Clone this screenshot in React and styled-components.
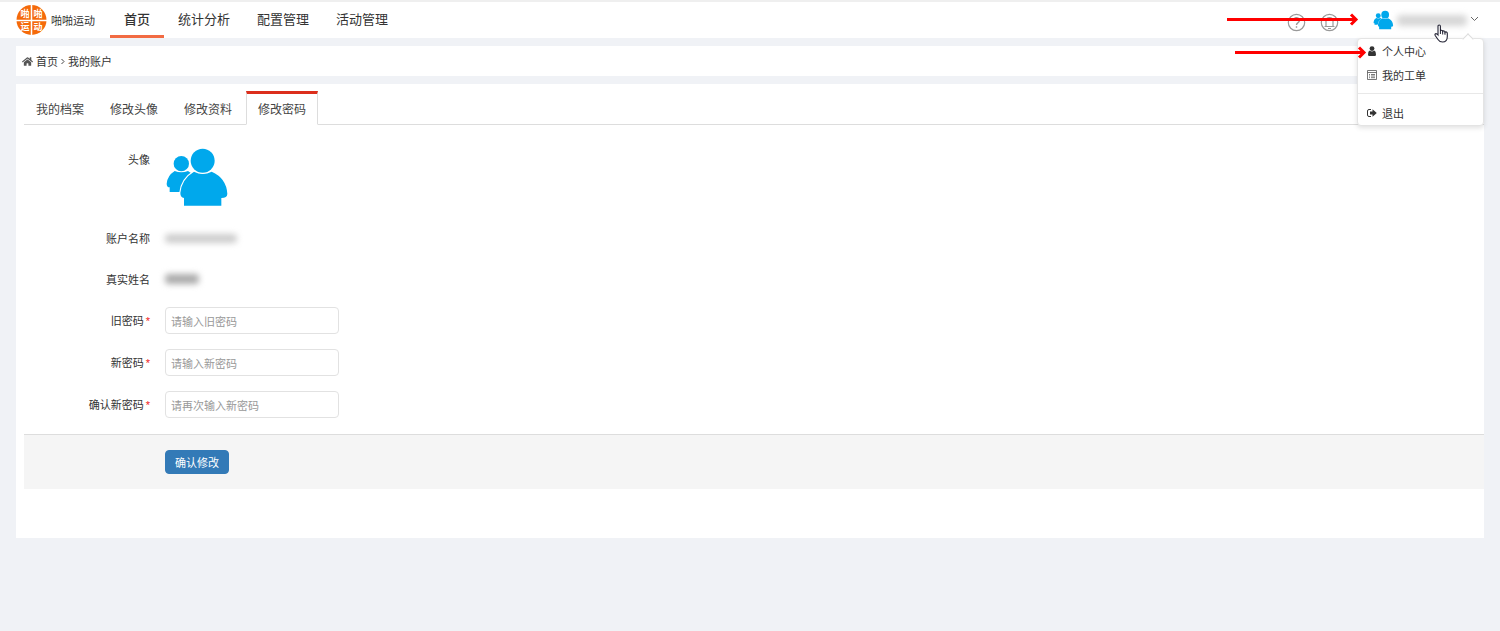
import * as React from "react";
import { useState } from "react";
import styled, { createGlobalStyle } from "styled-components";
import { FaHome } from "react-icons/fa";

const GlobalStyle = createGlobalStyle`
  * {
    box-sizing: border-box;
  }
  body {
    margin: 0;
    background: #f0f2f6;
    color: #333;
    font-family: "Noto Sans CJK SC", "Liberation Sans", sans-serif;
    font-size: 11px;
    line-height: 16px;
  }
  a {
    color: inherit;
    text-decoration: none;
  }
`;

const Header = styled.header`
  position: relative;
  display: flex;
  align-items: stretch;
  height: 38px;
  padding: 0 21px 0 16px;
  background: #fff;
  border-top: 2px solid #efefef;
`;

const Brand = styled.a`
  display: flex;
  align-items: center;
  gap: 4px;
  width: 94px;
`;

const Nav = styled.nav`
  display: flex;
  gap: 25px;
`;

const NavLink = styled.a`
  padding: 7px ${(p) => (p.$active ? "14px" : "0")} 0;
  margin-right: ${(p) => (p.$active ? "-11px" : "2px")};
  font-size: 13px;
  line-height: 20px;
  font-weight: ${(p) => (p.$active ? "500" : "400")};
  border-bottom: 3px solid ${(p) => (p.$active ? "#f26b43" : "transparent")};
`;

const Tools = styled.div`
  display: flex;
  align-items: center;
  gap: 14px;
  margin-left: auto;
`;

const IconButton = styled.button`
  display: flex;
  padding: 4px 0 0;
  border: 0;
  background: none;
  color: #999;
`;

const UserButton = styled.button`
  display: flex;
  align-items: center;
  gap: 3px;
  margin-left: 20px;
  padding: 0;
  border: 0;
  background: none;
  color: #666;
`;

const Smudge = styled.span`
  display: block;
  width: ${(p) => p.$width};
  height: ${(p) => p.$height};
  border-radius: 4px;
  background: ${(p) => p.$tone};
  filter: blur(3px);
`;

const Menu = styled.div`
  position: absolute;
  z-index: 2;
  top: 36px;
  right: 16px;
  width: 127px;
  background: #fff;
  border: 1px solid #e4e4e4;
  border-radius: 4px;
  box-shadow: 0 2px 5px rgba(0, 0, 0, 0.12);

  &::before {
    content: "";
    position: absolute;
    top: -4px;
    right: 11px;
    width: 7px;
    height: 7px;
    background: #fff;
    border: 1px solid #ddd;
    border-width: 1px 0 0 1px;
    transform: rotate(45deg);
  }
`;

const MenuItem = styled.a`
  display: flex;
  align-items: center;
  gap: 5px;
  height: 24px;
  padding: 0 9px;

  svg {
    width: 10px;
    height: 10px;
  }
`;

const MenuDivider = styled.hr`
  height: 1px;
  margin: 6px 0 7px;
  border: 0;
  background: #e8e8e8;
`;

const Arrow = styled.svg`
  position: absolute;
  z-index: 3;
  top: ${(p) => p.$top};
  right: ${(p) => p.$right};
  pointer-events: none;
`;

const Cursor = styled.svg`
  position: absolute;
  z-index: 4;
  top: 22px;
  right: 51px;
  pointer-events: none;
`;

const Content = styled.main`
  display: flex;
  flex-direction: column;
  gap: 8px;
  padding: 8px 16px;
`;

const Breadcrumb = styled.nav`
  display: flex;
  align-items: center;
  gap: 3px;
  height: 30px;
  padding: 0 6px;
  background: #fff;
`;

const Card = styled.section`
  padding: 7px 0 49px 8px;
  background: #fff;
`;

const Tabs = styled.div`
  display: flex;
  gap: 2px;
  border-bottom: 1px solid #ddd;
`;

const Tab = styled.button`
  height: 34px;
  margin-bottom: -1px;
  padding: 0 11px;
  border: 1px solid ${(p) => (p.$active ? "#ddd" : "transparent")};
  border-top: 3px solid ${(p) => (p.$active ? "#dc2f1c" : "transparent")};
  border-bottom-color: ${(p) => (p.$active ? "#fff" : "transparent")};
  background: none;
  color: #444;
  font-family: inherit;
  font-size: 12px;
  line-height: 16px;
`;

const Form = styled.form`
  display: flex;
  flex-direction: column;
  gap: 15px;
  padding-top: 22px;
`;

const Row = styled.div`
  display: grid;
  grid-template-columns: 126px 1fr;
  column-gap: 15px;
  align-items: ${(p) => (p.$top ? "start" : "center")};
  min-height: ${(p) => p.$height || "27px"};
`;

const Label = styled.label`
  padding-top: ${(p) => (p.$top ? "4px" : "0")};
  text-align: right;
`;

const Required = styled.span`
  margin-left: 2px;
  color: #f02020;
  font-family: "Liberation Sans", sans-serif;
`;

const Input = styled.input`
  width: 174px;
  height: 27px;
  padding: 0 5px;
  border: 1px solid #e2e2e2;
  border-radius: 4px;
  color: #333;
  font-family: inherit;
  font-size: 11px;

  &::placeholder {
    color: #999;
  }
`;

const Footer = styled.div`
  margin-top: 1px;
  padding: 15px 0 15px 141px;
  background: #f5f5f5;
  border-top: 1px solid #ddd;
`;

const Submit = styled.button`
  display: block;
  height: 24px;
  padding: 0 9px;
  border: 1px solid #337ab7;
  border-radius: 4px;
  background: #337ab7;
  color: #fff;
  font-family: inherit;
  font-size: 11px;
`;

function Logo() {
  return (
    <svg width="31" height="32" viewBox="0 0 31 32">
      <circle cx="15.5" cy="16" r="15" fill="#f56a0a" />
      <path d="M15.5 1v30M0 16.500h31" stroke="#fff" strokeWidth="1.500" />
      <g fill="#fff" fontSize="9" fontWeight="700" textAnchor="middle">
        <text x="9" y="13">啪</text>
        <text x="22" y="13">啪</text>
        <text x="9" y="26">运</text>
        <text x="22" y="26">动</text>
      </g>
    </svg>
  );
}

function People({ width, height }) {
  return (
    <svg width={width} height={height} viewBox="435 50 195 180" fill="#00a8ec">
      <circle cx="484" cy="100" r="23" />
      <path d="M464 122Q484 130 504 122L530 140V185H449V171Q440 171 440 160Q442 136 464 122Z" />
      <path
        d="M522 124Q548 138 575 124Q619 143 622 190Q622 203 604 203V226H492V203Q481 201 481 188Q485 146 522 124Z"
        stroke="#fff"
        strokeWidth="7"
        paintOrder="stroke"
      />
      <circle cx="548" cy="91" r="36" stroke="#fff" strokeWidth="6" paintOrder="stroke" />
    </svg>
  );
}

function HelpIcon() {
  return (
    <svg width="19" height="19" viewBox="0 0 19 19" fill="none" stroke="currentColor">
      <circle cx="9.5" cy="9.5" r="8.2" strokeWidth="1.2" />
      <path d="M6.800 7.500a2.700 2.700 0 1 1 4 2.300c-1 .6-1.300 1-1.300 2.200M9.500 13.200v1.500" strokeWidth="1.4" />
    </svg>
  );
}

function BellIcon() {
  return (
    <svg width="19" height="19" viewBox="0 0 19 19" fill="none" stroke="currentColor">
      <circle cx="9.5" cy="9.5" r="8.2" strokeWidth="1.2" />
      <path d="M6 13.500V8a3.500 3.500 0 0 1 7 0v5.500M4.500 13.500h10M8 15.500h3" strokeWidth="1.2" />
    </svg>
  );
}

function RedArrow({ top, right }) {
  return (
    <Arrow $top={top} $right={right} width="132" height="14" viewBox="0 0 132 14">
      <path d="M0 7.500H129M124 2.500L129 7.500L124 12.500" fill="none" stroke="#f00" strokeWidth="3" />
    </Arrow>
  );
}

const navItems = ["首页", "统计分析", "配置管理", "活动管理"];
const tabs = ["我的档案", "修改头像", "修改资料", "修改密码"];
const fields = [
  { id: "old", label: "旧密码", placeholder: "请输入旧密码" },
  { id: "new", label: "新密码", placeholder: "请输入新密码" },
  { id: "confirm", label: "确认新密码", placeholder: "请再次输入新密码" },
];

function App() {
  const [tab, setTab] = useState("修改密码");
  const [showMenu, setShowMenu] = useState(true);
  const [values, setValues] = useState({ old: "", new: "", confirm: "" });

  const handleSubmit = (e) => {
    e.preventDefault();
  };

  return (
    <>
      <GlobalStyle />
      <Header>
        <Brand href="#">
          <Logo />
          啪啪运动
        </Brand>
        <Nav>
          {navItems.map((item, i) => (
            <NavLink href="#" key={item} $active={i === 0}>
              {item}
            </NavLink>
          ))}
        </Nav>
        <Tools>
          <IconButton type="button" aria-label="帮助">
            <HelpIcon />
          </IconButton>
          <IconButton type="button" aria-label="通知">
            <BellIcon />
          </IconButton>
          <UserButton type="button" aria-label="账户" onClick={() => setShowMenu(!showMenu)}>
            <People width="21" height="20" />
            <Smudge $width="70px" $height="11px" $tone="#d6d6d6" />
            <svg width="9" height="8" viewBox="0 0 9 8" fill="none" stroke="currentColor">
              <path d="M1 1l3.500 3.500L8 1" />
            </svg>
          </UserButton>
        </Tools>

        {showMenu && (
          <Menu>
            <MenuItem href="#">
              <svg viewBox="0 0 10 10" fill="#333">
                <circle cx="5" cy="2.6" r="2.4" />
                <path d="M2.800 4.600Q5 6.400 7.200 4.600Q9 5.200 9 8.500Q9 10 7.800 10H2.200Q1 10 1 8.500Q1 5.200 2.800 4.600Z" />
              </svg>
              个人中心
            </MenuItem>
            <MenuItem href="#">
              <svg viewBox="0 0 10 10" fill="none" stroke="#555">
                <path d="M.5 .5h9v9h-9zM.5 2.500h9M2 4.500h1M4 4.500h4M2 6h1M4 6h4M2 7.700h1M4 7.700h4" strokeWidth=".8" />
              </svg>
              我的工单
            </MenuItem>
            <MenuDivider />
            <MenuItem href="#">
              <svg viewBox="0 0 10 10" fill="#333">
                <path d="M4 1.500H2Q.5 1.500 .5 3V7Q.5 8.500 2 8.500H4" fill="none" stroke="#333" />
                <path d="M3 3.500H5.500V1.300L9.800 5L5.500 8.700V6.500H3Z" />
              </svg>
              退出
            </MenuItem>
          </Menu>
        )}

        <RedArrow top="10px" right="141px" />
        <RedArrow top="43px" right="133px" />
        <Cursor width="15" height="19" viewBox="0 0 15 19">
          <path
            d="M4 11V2.200Q4 1 5.200 1T6.400 2.200V7Q6.800 6 7.800 6.300Q8.700 6.500 8.700 7.500Q9.300 6.600 10.200 7Q11 7.300 11 8.300Q11.600 7.600 12.500 8Q13.300 8.400 13.300 9.500V12.500Q13.300 18 8.500 18Q5.500 18 4 15.500L1.200 11.500Q.6 10.200 1.600 9.700Q2.600 9.400 4 11Z"
            fill="#fff"
            stroke="#223"
            strokeWidth="1.1"
          />
          <path d="M6.400 7v3M8.700 7.500v3M11 8.300v2.500" stroke="#223" />
        </Cursor>
      </Header>

      <Content>
        <Breadcrumb>
          <FaHome size={11} color="#555" />
          <a href="#">首页</a>
          <svg width="4" height="7" viewBox="0 0 4 7" fill="none" stroke="#444">
            <path d="M.5 1L3 3.500L.5 6" />
          </svg>
          <span>我的账户</span>
        </Breadcrumb>

        <Card>
          <Tabs>
            {tabs.map((t) => (
              <Tab type="button" key={t} $active={t === tab} onClick={() => setTab(t)}>
                {t}
              </Tab>
            ))}
          </Tabs>

          <Form onSubmit={handleSubmit}>
            <Row $top $height="63px">
              <Label as="span" $top>头像</Label>
              <People width="65" height="60" />
            </Row>
            <Row $height="26px">
              <Label as="span">账户名称</Label>
              <Smudge $width="72px" $height="9px" $tone="#ccc" />
            </Row>
            <Row $height="26px">
              <Label as="span">真实姓名</Label>
              <Smudge $width="34px" $height="10px" $tone="#aaa" />
            </Row>
            {fields.map((f) => (
              <Row key={f.id}>
                <Label htmlFor={f.id}>
                  {f.label}
                  <Required>*</Required>
                </Label>
                <Input
                  id={f.id}
                  type="password"
                  placeholder={f.placeholder}
                  value={values[f.id]}
                  onChange={(e) => setValues({ ...values, [f.id]: e.target.value })}
                />
              </Row>
            ))}
            <Footer>
              <Submit type="submit">确认修改</Submit>
            </Footer>
          </Form>
        </Card>
      </Content>
    </>
  );
}

export default App;
